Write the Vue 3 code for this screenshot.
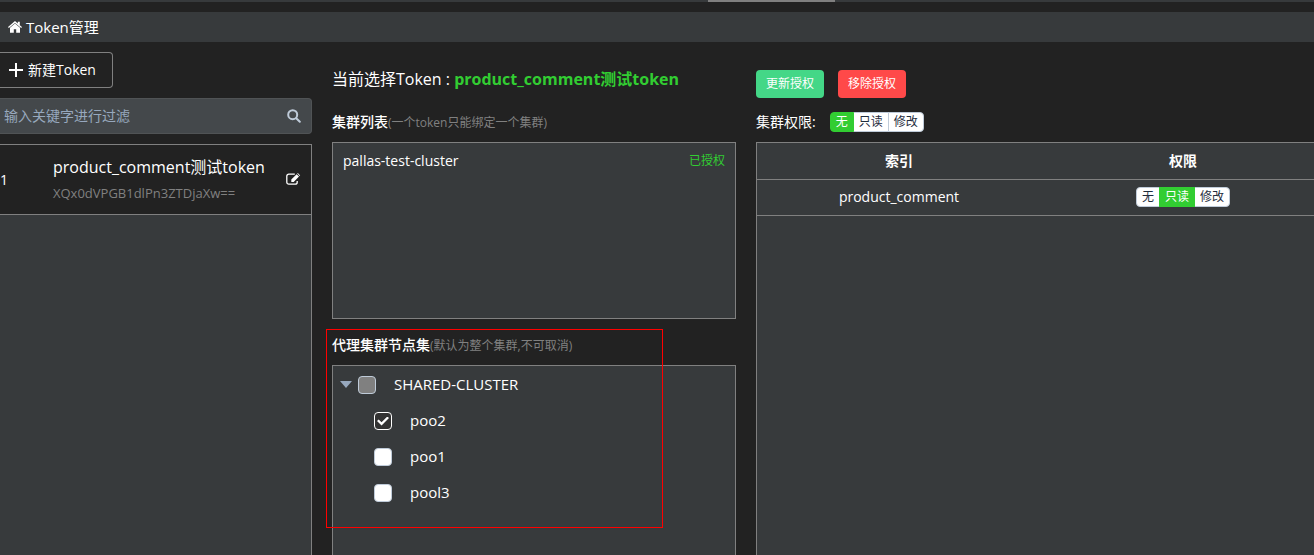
<script setup>
import { ref } from 'vue'

const levels = ['无', '只读', '修改']
const keyword = ref('')
const clusterLevel = ref('无')
const tokens = [{ id: 1, name: 'product_comment测试token', key: 'XQx0dVPGB1dlPn3ZTDjaXw==' }]
const clusters = [{ name: 'pallas-test-cluster', state: '已授权' }]
const pools = ref([
  { name: 'poo2', checked: true },
  { name: 'poo1', checked: false },
  { name: 'pool3', checked: false }
])
const indices = ref([{ name: 'product_comment', level: '只读' }])
</script>

<template>
  <div class="page">
    <div class="nav-edge"><span class="nav-current"></span></div>
    <header class="title-bar">
      <svg class="home" viewBox="0 0 14 12" aria-hidden="true">
        <path d="M7 0 0 6.100l.8.9L7 1.900 13.200 7l.8-.9-2.200-1.900V.7h-2v1.700z" />
        <path d="M7 2.500 2 6.800v4.900h3.800V8.200h2.400v3.500H12V6.800z" />
      </svg>
      <h1>Token管理</h1>
    </header>

    <main class="columns">
      <section class="tokens">
        <button class="create" type="button">
          <svg viewBox="0 0 14 14" aria-hidden="true"><path d="M6 0h2v6h6v2H8v6H6V8H0V6h6z" /></svg>
          <span>新建Token</span>
        </button>
        <div class="search">
          <input v-model="keyword" type="text" aria-label="输入关键字进行过滤" placeholder="输入关键字进行过滤" />
          <svg viewBox="0 0 14 14" aria-hidden="true">
            <circle cx="5.700" cy="5.700" r="4.500" />
            <path d="M9.200 9.200 12.800 12.800" />
          </svg>
        </div>
        <ul class="panel token-list">
          <li v-for="token in tokens" :key="token.id">
            <span class="order">{{ token.id }}</span>
            <div class="token-text">
              <div class="token-name">{{ token.name }}</div>
              <div class="token-key">{{ token.key }}</div>
            </div>
            <button class="edit" type="button" aria-label="编辑">
              <svg viewBox="0 0 15 12" aria-hidden="true">
                <path class="sheet" d="M8.800 1.200H2.800A2 2 0 0 0 .8 3.200v6a2 2 0 0 0 2 2h6.400a2 2 0 0 0 2-2V8" />
                <path class="pen" d="M5.300 8.900V6.500L10.600 1.200l2.400 2.400L7.700 8.900zM11.200.6l.6-.6 2.400 2.400-.6.600z" />
              </svg>
            </button>
          </li>
        </ul>
      </section>

      <section class="clusters">
        <p class="current">当前选择Token : <strong>product_comment测试token</strong></p>
        <h2>集群列表<small>(一个token只能绑定一个集群)</small></h2>
        <ul class="panel cluster-list">
          <li v-for="cluster in clusters" :key="cluster.name">
            <span>{{ cluster.name }}</span>
            <span class="state">{{ cluster.state }}</span>
          </li>
        </ul>
        <div class="nodes">
          <h2>代理集群节点集<small>(默认为整个集群,不可取消)</small></h2>
          <div class="panel tree">
            <div class="node">
              <span class="caret"></span>
              <input id="pool-root" type="checkbox" disabled />
              <label for="pool-root">SHARED-CLUSTER</label>
            </div>
            <div v-for="pool in pools" :key="pool.name" class="node child">
              <input :id="'pool-' + pool.name" v-model="pool.checked" type="checkbox" />
              <label :for="'pool-' + pool.name">{{ pool.name }}</label>
            </div>
          </div>
          <div class="highlight"></div>
        </div>
      </section>

      <section class="rights">
        <div class="actions">
          <button class="update" type="button">更新授权</button>
          <button class="remove" type="button">移除授权</button>
        </div>
        <div class="cluster-level">
          <span>集群权限:</span>
          <div class="segments" role="radiogroup" aria-label="集群权限">
            <label v-for="level in levels" :key="level" :class="{ on: clusterLevel === level }">
              <input v-model="clusterLevel" type="radio" name="cluster-level" :value="level" />{{ level }}
            </label>
          </div>
        </div>
        <div class="panel index-panel">
          <table>
            <thead>
              <tr><th>索引</th><th>权限</th></tr>
            </thead>
            <tbody>
              <tr v-for="index in indices" :key="index.name">
                <td>{{ index.name }}</td>
                <td>
                  <div class="segments" role="radiogroup" :aria-label="index.name">
                    <label v-for="level in levels" :key="level" :class="{ on: index.level === level }">
                      <input v-model="index.level" type="radio" :name="index.name" :value="level" />{{ level }}
                    </label>
                  </div>
                </td>
              </tr>
            </tbody>
          </table>
        </div>
      </section>
    </main>
  </div>
</template>

<style>
body {
  margin: 0;
  background: #222;
}
</style>

<style scoped>
.page {
  display: flex;
  flex-direction: column;
  min-height: 100vh;
  overflow: hidden;
  background: #222;
  color: #fff;
  font: 14px/20px "Open Sans", "Noto Sans CJK SC", sans-serif;
}
.page *,
.page *::before {
  box-sizing: border-box;
}
button,
input {
  margin: 0;
  font: inherit;
  color: inherit;
}
button {
  cursor: pointer;
}
h1,
h2,
p,
ul {
  margin: 0;
  padding: 0;
  list-style: none;
}
.nav-edge {
  display: flex;
  justify-content: center;
  height: 2px;
  padding-left: 229px;
  background: #373a3c;
}
.nav-current {
  width: 127px;
  background: #808080;
}
.title-bar {
  display: flex;
  align-items: center;
  gap: 4px;
  height: 30px;
  margin-top: 10px;
  padding-left: 8px;
  background: #373a3c;
}
.title-bar h1 {
  font-size: 15px;
  font-weight: 400;
}
.home {
  width: 14px;
  height: 12px;
  fill: #fff;
}
.columns {
  flex: 1;
  display: grid;
  grid-template-columns: minmax(0, 312fr) minmax(0, 404fr) minmax(0, 558fr);
  gap: 20px;
}
.columns > section {
  display: flex;
  flex-direction: column;
  padding-top: 10px;
}
.panel {
  border: 1px solid #808080;
  border-bottom: 0;
  background: #373a3c;
}

.create {
  display: flex;
  align-items: center;
  align-self: flex-start;
  gap: 5px;
  height: 36px;
  padding: 0 16px 0 9px;
  border: 1px solid #808080;
  border-left: 0;
  border-radius: 0 4px 4px 0;
  background: transparent;
}
.create svg {
  width: 14px;
  height: 14px;
  fill: #fff;
}
.search {
  display: flex;
  align-items: center;
  height: 36px;
  margin: 10px 0;
  padding-right: 10px;
  border: 1px solid #505355;
  border-left: 0;
  border-radius: 0 4px 4px 0;
  background: #44484b;
}
.search input {
  flex: 1;
  min-width: 0;
  padding: 0 4px;
  border: 0;
  outline: 0;
  background: transparent;
}
.search input::placeholder {
  color: #97a8be;
  opacity: 1;
}
.search svg {
  width: 14px;
  height: 14px;
  fill: none;
  stroke: #bfcbd9;
  stroke-width: 2;
  stroke-linecap: round;
}
.token-list {
  flex: 1;
  border-left: 0;
}
.token-list li {
  display: flex;
  align-items: center;
  height: 70px;
  border-bottom: 1px solid #808080;
  background: #222;
}
.order {
  width: 53px;
}
.token-text {
  flex: 1;
  min-width: 0;
  margin-right: 18px;
}
.token-name {
  overflow: hidden;
  font-size: 16px;
  line-height: 24px;
  white-space: nowrap;
}
.token-key {
  margin: 4px 0 2px;
  color: #808080;
  font-size: 13px;
}
.edit {
  display: flex;
  margin-right: 10px;
  padding: 0 0 2px;
  border: 0;
  background: transparent;
}
.edit svg {
  width: 15px;
  height: 12px;
}
.sheet {
  fill: none;
  stroke: #fff;
  stroke-width: 1.3;
}
.pen {
  fill: #fff;
}

.current {
  margin: 15px 0;
  font-size: 16px;
  line-height: 24px;
  white-space: nowrap;
}
.current strong {
  color: #32cd32;
}
h2 {
  height: 36px;
  font-size: 14px;
  font-weight: 500;
  line-height: 32px;
  white-space: nowrap;
}
h2 small {
  color: #808080;
  font-size: 12px;
  font-weight: 400;
}
.cluster-list {
  height: 177px;
  border-bottom: 1px solid #808080;
}
.cluster-list li {
  display: flex;
  align-items: center;
  justify-content: space-between;
  height: 36px;
  padding: 0 10px;
}
.state {
  color: #32cd32;
  font-size: 12px;
}
.nodes {
  position: relative;
  flex: 1;
  display: flex;
  flex-direction: column;
  padding-top: 10px;
}
.tree {
  flex: 1;
  font-size: 15px;
}
.node {
  display: flex;
  align-items: center;
  gap: 18px;
  height: 36px;
  padding-left: 7px;
}
.node.child {
  padding-left: 41px;
}
.caret {
  margin-right: -12px;
  border: 6px solid transparent;
  border-top: 7px solid #97a8be;
  border-bottom: 0;
}
.node input {
  appearance: none;
  display: grid;
  place-items: center;
  width: 18px;
  height: 18px;
  margin-top: 2px;
  border: 1px solid #bfcbd9;
  border-radius: 4px;
  background: #fff;
}
.node input:disabled {
  background: #808080;
}
.node input:checked {
  border-color: #fff;
  background: #333;
}
.node input:checked::before {
  content: "";
  width: 12px;
  height: 9px;
  background: #fff;
  clip-path: polygon(0 50%, 14% 34%, 38% 63%, 86% 0, 100% 16%, 38% 100%);
}
.highlight {
  position: absolute;
  top: 10px;
  left: -6px;
  width: 337px;
  height: 199px;
  border: 1px solid #f00;
  pointer-events: none;
}

.actions {
  display: flex;
  gap: 14px;
  margin: 18px 0 14px;
}
.actions button {
  height: 28px;
  padding: 0 10px;
  border: 0;
  border-radius: 4px;
  font-size: 12px;
}
.update {
  background: #44d787;
}
.remove {
  background: #ff4949;
}
.cluster-level {
  display: flex;
  align-items: center;
  gap: 14px;
  margin-bottom: 10px;
}
.segments {
  display: inline-flex;
  vertical-align: top;
}
.segments label {
  position: relative;
  height: 20px;
  margin-left: -1px;
  padding: 0 5px;
  border: 1px solid #bfcbd9;
  background: #fff;
  color: #1f2d3d;
  font-size: 12px;
  line-height: 18px;
}
.segments label:first-child {
  margin-left: 0;
  border-radius: 4px 0 0 4px;
}
.segments label:last-child {
  border-radius: 0 4px 4px 0;
}
.segments .on {
  z-index: 1;
  border-color: #32cd32;
  background: #32cd32;
  color: #fff;
}
.segments input {
  position: absolute;
  inset: 0;
  opacity: 0;
}
.index-panel {
  flex: 1;
  margin-right: -12px;
}
table {
  width: 100%;
  border-collapse: collapse;
  table-layout: fixed;
}
th,
td {
  height: 36px;
  padding: 0;
  border-bottom: 1px solid #808080;
  text-align: center;
}
th {
  font-weight: 700;
}
</style>
